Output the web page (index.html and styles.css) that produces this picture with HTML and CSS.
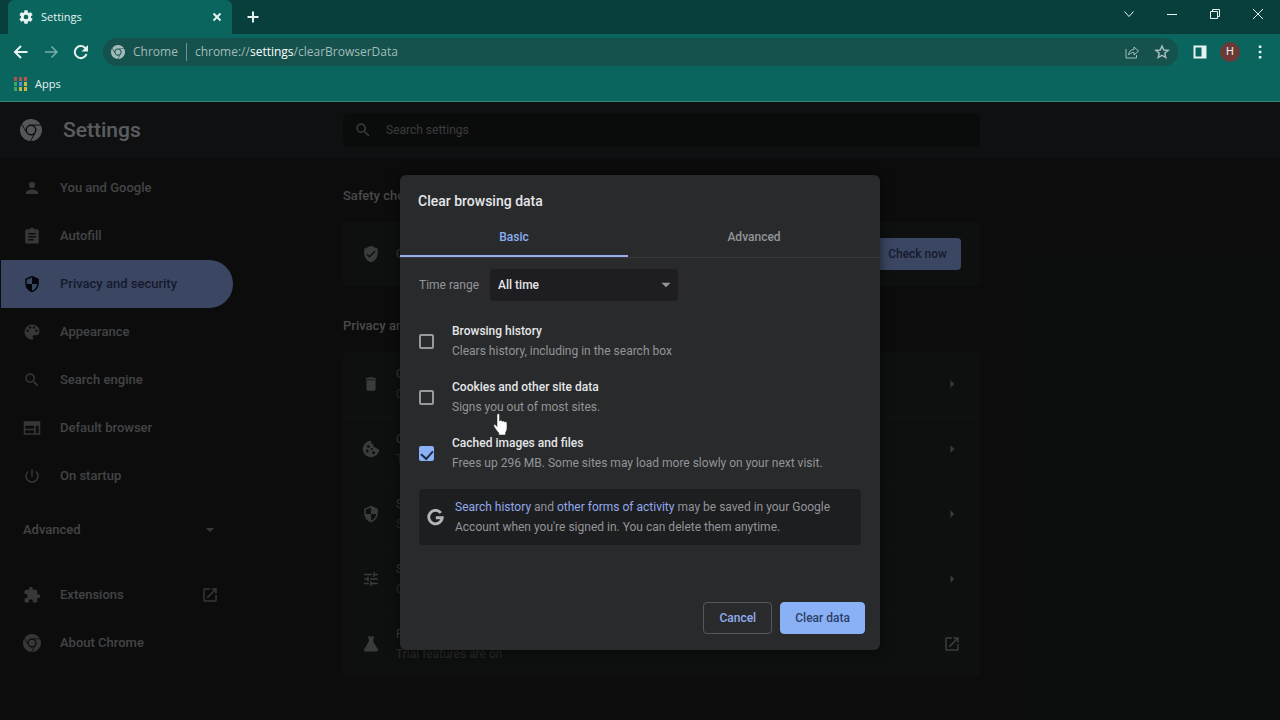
FILE: index.html
```html
<!DOCTYPE html>
<html lang="en">
<head>
    <meta charset="utf-8">
    <title>Settings</title>
    <meta name="viewport" content="width=device-width, initial-scale=1.0">
    <link rel="stylesheet" href="styles.css">
</head>
<body>
    <svg class="sprite" aria-hidden="true">
        <symbol id="chrome" viewBox="0 0 24 24">
            <path d="M2.2 5.060A12 12 0 0 1 22.400 6H12A6 6 0 0 0 6 11.600Z"/>
            <path transform="rotate(120 12 12)" d="M2.2 5.060A12 12 0 0 1 22.400 6H12A6 6 0 0 0 6 11.600Z"/>
            <path transform="rotate(240 12 12)" d="M2.2 5.060A12 12 0 0 1 22.400 6H12A6 6 0 0 0 6 11.600Z"/>
            <circle cx="12" cy="12" r="4.4"/>
        </symbol>
        <symbol id="search" viewBox="0 0 24 24"><path d="M15.5 14h-.79l-.28-.27A6.47 6.47 0 0 0 16 9.5 6.5 6.5 0 1 0 9.5 16c1.61 0 3.09-.59 4.23-1.57l.27.28v.79l5 4.99L20.49 19l-4.99-5zm-6 0C7.01 14 5 11.99 5 9.5S7.01 5 9.5 5 14 7.01 14 9.5 11.99 14 9.5 14z"/></symbol>
        <symbol id="open" viewBox="0 0 24 24"><path d="M19 19H5V5h7V3H5a2 2 0 0 0-2 2v14a2 2 0 0 0 2 2h14c1.1 0 2-.9 2-2v-7h-2v7zM14 3v2h3.59l-9.83 9.83 1.41 1.41L19 6.41V10h2V3h-7z"/></symbol>
        <symbol id="shield" viewBox="0 0 24 24"><path d="M12 1L3 5v6c0 5.55 3.84 10.74 9 12 5.16-1.26 9-6.45 9-12V5l-9-4zm0 10.99h7c-.53 4.12-3.28 7.79-7 8.94V12H5V6.3l7-3.11v8.8z"/></symbol>
        <symbol id="arrow-right" viewBox="0 0 24 24"><path d="M10 17V7l5 5z"/></symbol>
        <symbol id="arrow-down" viewBox="0 0 24 24"><path d="M5 8.5h14l-7 7z"/></symbol>
    </svg>

    <div class="browser">
        <div class="tab-strip">
            <div class="tab">
                <svg class="icon" viewBox="0 0 24 24"><path d="M19.43 12.98c.04-.32.07-.64.07-.98s-.03-.66-.07-.98l2.11-1.65c.19-.15.24-.42.12-.64l-2-3.46c-.12-.22-.39-.3-.61-.22l-2.49 1c-.52-.4-1.08-.73-1.69-.98l-.38-2.65A.488.488 0 0 0 14 2h-4c-.25 0-.46.18-.49.42l-.38 2.65c-.61.25-1.17.59-1.69.98l-2.49-1c-.23-.09-.49 0-.61.22l-2 3.46c-.13.22-.07.49.12.64l2.11 1.65c-.04.32-.07.65-.07.98s.03.66.07.98l-2.11 1.65c-.19.15-.24.42-.12.64l2 3.46c.12.22.39.3.61.22l2.49-1c.52.4 1.08.73 1.69.98l.38 2.65c.03.24.24.42.49.42h4c.25 0 .46-.18.49-.42l.38-2.65c.61-.25 1.17-.59 1.69-.98l2.49 1c.23.09.49 0 .61-.22l2-3.46c.12-.22.07-.49-.12-.64l-2.11-1.65zM12 15.5a3.5 3.5 0 1 1 0-7 3.5 3.5 0 0 1 0 7z"/></svg>
                <span class="tab-title">Settings</span>
                <button class="tool" aria-label="Close tab"><svg viewBox="0 0 16 16"><path class="line bold" d="M4.500 4.500l7 7M11.500 4.500l-7 7"/></svg></button>
            </div>
            <button class="tool new-tab" aria-label="New tab"><svg viewBox="0 0 16 16"><path class="line bold" d="M8 2.500v11M2.500 8h11"/></svg></button>
            <div class="window-buttons">
                <button class="tool" aria-label="Search tabs"><svg viewBox="0 0 16 16"><path class="line" d="M3.500 5.500L8 10.500l4.500-5"/></svg></button>
                <button class="tool" aria-label="Minimize"><svg viewBox="0 0 16 16"><path class="line" d="M3 8.500h10"/></svg></button>
                <button class="tool" aria-label="Restore"><svg viewBox="0 0 16 16"><path class="line" d="M3.500 5.500h7v7h-7zM5.500 5.500v-2h7v7h-2"/></svg></button>
                <button class="tool" aria-label="Close"><svg viewBox="0 0 16 16"><path class="line" d="M3 3l10 10M13 3L3 13"/></svg></button>
            </div>
        </div>

        <div class="toolbar">
            <div class="tools nav-tools">
                <button class="tool" aria-label="Back"><svg viewBox="0 0 16 16"><path class="line bold" d="M14.500 8H2.500M8 2L2 8l6 6"/></svg></button>
                <button class="tool forward" aria-label="Forward"><svg viewBox="0 0 16 16"><path class="line medium" d="M2 8h12M8.500 2.500L14 8l-5.500 5.500"/></svg></button>
                <button class="tool" aria-label="Reload"><svg viewBox="0 0 16 16"><path class="line bold" d="M13.500 10A6 6 0 1 1 12 3.800L13.500 5.500"/><path fill="currentColor" d="M15 1v6.500H8.500z"/></svg></button>
            </div>
            <div class="omnibox">
                <svg class="icon"><use href="#chrome"/></svg>
                <span class="site-name">Chrome</span>
                <div class="url" role="textbox" contenteditable="true" spellcheck="false" aria-label="Address">chrome://<b>settings</b>/clearBrowserData</div>
                <button class="tool" aria-label="Share"><svg viewBox="0 0 16 16"><path class="line" d="M2 5v9h10.500v-3M4.500 11c.3-3.500 2.200-5.300 5.500-5.500V3l4.500 4L10 11V8.500C7.500 8.500 5.800 9.300 4.500 11z"/></svg></button>
                <button class="tool" aria-label="Bookmark this tab"><svg viewBox="0 0 16 16"><path class="line medium" d="M8 2l1.800 4 4.300.4-3.300 2.900 1 4.300L8 11.400l-3.800 2.200 1-4.300-3.300-2.900L6.200 6z"/></svg></button>
            </div>
            <div class="tools">
                <button class="tool" aria-label="Side panel"><svg viewBox="0 0 16 16"><path fill="currentColor" fill-rule="evenodd" d="M1.500 1.500h13v13h-13zM3.500 3.500v9h6v-9z"/></svg></button>
                <button class="avatar" aria-label="Profile">H</button>
                <button class="tool" aria-label="Menu"><svg viewBox="0 0 16 16"><path fill="currentColor" d="M6.800 1.500h2.600v2.600H6.800zM6.800 6.700h2.600v2.600H6.800zM6.800 11.900h2.600v2.600H6.800z"/></svg></button>
            </div>
        </div>

        <div class="bookmarks">
            <a class="bookmark" href="#">
                <svg viewBox="0 0 14 14"><path fill="#a8584c" d="M1 0h3v4H1zM6 0h3v4H6z"/><path fill="#b8584c" d="M11 0h3v4h-3z"/><path fill="#37a866" d="M1 5h3v4H1zM1 10h3v4H1z"/><path fill="#4f8fd0" d="M6 5h3v4H6z"/><path fill="#c8b54a" d="M11 5h3v4h-3zM6 10h3v4H6zM11 10h3v4h-3z"/></svg>
                Apps
            </a>
        </div>
    </div>

    <div class="page">
        <header class="header">
            <div class="brand">
                <svg><use href="#chrome"/></svg>
                <h1>Settings</h1>
            </div>
            <label class="search">
                <svg class="icon"><use href="#search"/></svg>
                <input type="search" placeholder="Search settings" aria-label="Search settings">
            </label>
        </header>

        <div class="columns">
            <nav class="sidebar">
                <a class="nav-item" href="#"><svg class="icon" viewBox="0 0 24 24"><path d="M12 12a4 4 0 1 0 0-8 4 4 0 0 0 0 8zm0 2c-2.670 0-8 1.340-8 4v2h16v-2c0-2.660-5.330-4-8-4z"/></svg>You and Google</a>
                <a class="nav-item" href="#"><svg class="icon" viewBox="0 0 24 24"><path d="M19 3h-4.180a3 3 0 0 0-5.640 0H5a2 2 0 0 0-2 2v15c0 1.100.9 2 2 2h14a2 2 0 0 0 2-2V5a2 2 0 0 0-2-2zm-5 15H7v-2h7v2zm3-4H7v-2h10v2zm0-4H7V8h10v2z"/></svg>Autofill</a>
                <a class="nav-item selected" href="#"><svg class="icon"><use href="#shield"/></svg>Privacy and security</a>
                <a class="nav-item" href="#"><svg class="icon" viewBox="0 0 24 24"><path d="M12 2a10 10 0 0 0 0 20c.9 0 1.700-.7 1.700-1.700 0-.4-.2-.8-.4-1.100-.3-.3-.4-.7-.4-1.100 0-.9.700-1.700 1.700-1.700h2A5.500 5.500 0 0 0 22 11c0-5-4.500-9-10-9zM6 12a1.600 1.600 0 1 1 0-3.200A1.600 1.600 0 0 1 6 12zm3.300-4.500a1.600 1.600 0 1 1 0-3.200 1.600 1.600 0 0 1 0 3.200zm5.400 0a1.600 1.600 0 1 1 0-3.200 1.600 1.600 0 0 1 0 3.200zM18 12a1.600 1.600 0 1 1 0-3.200 1.600 1.600 0 0 1 0 3.200z"/></svg>Appearance</a>
                <a class="nav-item" href="#"><svg class="icon"><use href="#search"/></svg>Search engine</a>
                <a class="nav-item" href="#"><svg class="icon" viewBox="0 0 24 24"><path fill-rule="evenodd" d="M1 3h22v18H1zM3 9v4h12V9zM3 15v4h12v-4zM17 9v10h4V9z"/></svg>Default browser</a>
                <a class="nav-item" href="#"><svg class="icon" viewBox="0 0 24 24"><path d="M13 3h-2v10h2V3zm4.830 2.170l-1.420 1.420A6.920 6.920 0 0 1 19 12a7 7 0 1 1-11.420-5.420L6.170 5.170A8.930 8.930 0 0 0 3 12a9 9 0 1 0 14.830-6.830z"/></svg>On startup</a>
                <button class="nav-item advanced">Advanced<svg class="icon"><use href="#arrow-down"/></svg></button>
                <hr>
                <a class="nav-item" href="#"><svg class="icon" viewBox="0 0 24 24"><path d="M20.500 11H19V7a2 2 0 0 0-2-2h-4V3.500a2.500 2.500 0 0 0-5 0V5H4a2 2 0 0 0-2 2v3.800h1.500a2.700 2.700 0 0 1 0 5.400H2V20c0 1.100.9 2 2 2h3.800v-1.500a2.700 2.700 0 0 1 5.400 0V22H17a2 2 0 0 0 2-2v-4h1.500a2.500 2.500 0 0 0 0-5z"/></svg>Extensions<svg class="icon trailing"><use href="#open"/></svg></a>
                <a class="nav-item" href="#"><svg class="icon"><use href="#chrome"/></svg>About Chrome</a>
            </nav>

            <main class="content">
                <h2>Safety check</h2>
                <section class="card">
                    <div class="row">
                        <svg class="icon" viewBox="0 0 24 24"><path d="M12 1L3 5v6c0 5.550 3.840 10.740 9 12 5.160-1.260 9-6.450 9-12V5l-9-4zm-2 16l-4-4 1.410-1.410L10 14.170l6.590-6.590L18 9l-8 8z"/></svg>
                        <div class="row-text"><span>Chrome can help keep you safe</span></div>
                        <button class="check-now">Check now</button>
                    </div>
                </section>

                <h2>Privacy and security</h2>
                <section class="card">
                    <a class="row" href="#">
                        <svg class="icon" viewBox="0 0 24 24"><path d="M6 19c0 1.100.9 2 2 2h8a2 2 0 0 0 2-2V7H6v12zM19 4h-3.500l-1-1h-5l-1 1H5v2h14V4z"/></svg>
                        <div class="row-text"><span>Clear browsing data</span><small>Clear history, cookies, cache, and more</small></div>
                        <svg class="icon"><use href="#arrow-right"/></svg>
                    </a>
                    <a class="row" href="#">
                        <svg class="icon" viewBox="0 0 24 24"><path fill-rule="evenodd" d="M12 1a11 11 0 1 0 11 11c-2 .6-3.600-.4-4-2-2.600.3-4.200-1.400-3.800-3.800C13 5.800 11.800 3.600 12 1zM8.500 6.500a2 2 0 1 0 .01 0zM7 12.500a2 2 0 1 0 .01 0zM13 10.500a1.500 1.500 0 1 0 .01 0zM15.500 15a2 2 0 1 0 .01 0z"/></svg>
                        <div class="row-text"><span>Cookies and other site data</span><small>Third-party cookies are blocked in Incognito</small></div>
                        <svg class="icon"><use href="#arrow-right"/></svg>
                    </a>
                    <a class="row" href="#">
                        <svg class="icon"><use href="#shield"/></svg>
                        <div class="row-text"><span>Security</span><small>Safe Browsing and other security settings</small></div>
                        <svg class="icon"><use href="#arrow-right"/></svg>
                    </a>
                    <a class="row" href="#">
                        <svg class="icon" viewBox="0 0 24 24"><path d="M3 17v2h6v-2H3zM3 5v2h10V5H3zm10 16v-2h8v-2h-8v-2h-2v6h2zM7 9v2H3v2h4v2h2V9H7zm14 4v-2H11v2h10zM15 9h2V7h4V5h-4V3h-2v6z"/></svg>
                        <div class="row-text"><span>Site settings</span><small>Controls what information sites can use</small></div>
                        <svg class="icon"><use href="#arrow-right"/></svg>
                    </a>
                    <a class="row" href="#">
                        <svg class="icon" viewBox="0 0 24 24"><path d="M8 2h8v2h-1v5l6 10c.8 1.400 0 3-1.600 3H4.600C3 22 2.200 20.400 3 19L9 9V4H8z"/></svg>
                        <div class="row-text"><span>Privacy Sandbox</span><small>Trial features are on</small></div>
                        <svg class="icon"><use href="#open"/></svg>
                    </a>
                </section>
            </main>
        </div>

        <div class="backdrop">
            <form class="dialog" role="dialog" aria-labelledby="dialog-title">
                <h2 id="dialog-title">Clear browsing data</h2>
                <div class="tabs" role="tablist">
                    <button type="button" class="active" role="tab" aria-selected="true">Basic</button>
                    <button type="button" role="tab" aria-selected="false">Advanced</button>
                </div>

                <div class="time-range">
                    <label for="range">Time range</label>
                    <div class="select">
                        <select id="range">
                            <option>Last hour</option>
                            <option>Last 24 hours</option>
                            <option>Last 7 days</option>
                            <option>Last 4 weeks</option>
                            <option selected>All time</option>
                        </select>
                        <svg class="icon"><use href="#arrow-down"/></svg>
                    </div>
                </div>

                <div class="options">
                    <label class="option">
                        <input type="checkbox">
                        <span><strong>Browsing history</strong>Clears history, including in the search box</span>
                    </label>
                    <label class="option">
                        <input type="checkbox">
                        <span><strong>Cookies and other site data</strong>Signs you out of most sites.</span>
                    </label>
                    <label class="option">
                        <input type="checkbox" checked>
                        <span><strong>Cached images and files</strong>Frees up 296 MB. Some sites may load more slowly on your next visit.</span>
                    </label>
                </div>

                <div class="notice">
                    <svg class="icon" viewBox="0 0 24 24"><path fill="none" stroke="currentColor" stroke-width="4" d="M19.500 5.500A9.500 9.500 0 1 0 21.500 12.300H12.500"/></svg>
                    <p><a href="#">Search history</a> and <a href="#">other forms of activity</a> may be saved in your Google Account when you're signed in. You can delete them anytime.</p>
                </div>

                <div class="actions">
                    <button type="button" class="cancel">Cancel</button>
                    <button type="submit" class="clear">Clear data</button>
                </div>

                <svg class="pointer" viewBox="0 0 16 24"><path fill="#fff" stroke="#222" stroke-width=".5" d="M4 1.800C4 .4 6.500.4 6.500 1.800V8c.5-1 2.400-.8 2.600.4.600-.9 2.300-.6 2.500.6.800-.7 2.400-.3 2.400 1.200V15c0 2-.9 3.500-1.500 4.800V22H5.800v-2C4.500 18.500 2 15.500.8 13c-.6-1.400 1-2.200 2-.9L4 13.500z"/></svg>
            </form>
        </div>
    </div>
</body>
</html>
```

FILE: styles.css
```css
:root {
    --strip: #083f3d;
    --toolbar: #0b655f;
    --omnibox: #15514d;
    --page-bg: #1e2021;
    --card-bg: #25282a;
    --header-bg: #232a2f;
    --dialog-bg: #292a2c;
    --accent: #8ab0f5;
    --text: #e4e6e8;
    --muted: #929598;
}

* {
    box-sizing: border-box;
}

body {
    margin: 0;
    height: 100vh;
    display: flex;
    flex-direction: column;
    overflow: hidden;
    background: var(--page-bg);
    color: var(--text);
    font: 12px/20px Roboto, sans-serif;
}

button,
input,
select {
    font: inherit;
    color: inherit;
    border: none;
    background: none;
    padding: 0;
    margin: 0;
}

a {
    color: inherit;
    text-decoration: none;
}

.sprite {
    position: absolute;
    width: 0;
    height: 0;
}

.icon {
    flex: none;
    width: 18px;
    height: 18px;
    fill: currentColor;
}

.line {
    fill: none;
    stroke: currentColor;
    stroke-width: 1;
}

.line.medium {
    stroke-width: 1.5;
}

.line.bold {
    stroke-width: 2;
}

/* browser frame */
.browser {
    flex: none;
    background: var(--toolbar);
    border-bottom: 1px solid #3b827d;
    color: #e6f3f1;
    font-family: "Open Sans", "Noto Sans", sans-serif;
    font-size: 11px;
}

.tab-strip {
    display: flex;
    align-items: center;
    height: 34px;
    padding-left: 8px;
    background: var(--strip);
}

.tab {
    display: flex;
    align-items: center;
    align-self: stretch;
    gap: 7px;
    width: 224px;
    padding: 0 7px 0 10px;
    background: var(--toolbar);
    border-radius: 6px 6px 0 0;
}

.tab .icon {
    width: 16px;
    height: 16px;
}

.tab-title {
    flex: 1;
}

.tool {
    flex: none;
    display: flex;
    width: 16px;
    height: 16px;
}

.tool svg {
    width: 16px;
    height: 16px;
}

.new-tab {
    margin-left: 13px;
}

.window-buttons {
    display: flex;
    gap: 27px;
    margin-left: auto;
    padding: 0 14px 6px 0;
}

.toolbar {
    display: flex;
    align-items: center;
    gap: 14px;
    height: 36px;
    padding: 0 12px 0 13px;
}

.tools {
    display: flex;
    align-items: center;
    gap: 12px;
}

.nav-tools {
    gap: 14px;
}

.forward {
    opacity: 0.5;
}

.omnibox {
    flex: 1;
    display: flex;
    align-items: center;
    gap: 8px;
    height: 28px;
    padding: 0 8px;
    border-radius: 14px;
    background: var(--omnibox);
    color: #a3bcb9;
    font-size: 12px;
}

.omnibox .icon {
    width: 14px;
    height: 14px;
}

.omnibox .tool {
    margin-left: 6px;
}

.site-name {
    line-height: 18px;
    padding-right: 8px;
    border-right: 1px solid #6f9490;
}

.url {
    flex: 1;
}

.url b {
    font-weight: 400;
    color: #fff;
}

.avatar {
    width: 20px;
    height: 20px;
    border-radius: 50%;
    background: #6a3a36;
    font: 11px/20px Roboto, sans-serif;
}

.bookmarks {
    display: flex;
    align-items: center;
    height: 31px;
    padding: 0 13px 4px;
}

.bookmark {
    display: flex;
    align-items: center;
    gap: 8px;
}

.bookmark svg {
    width: 14px;
    height: 14px;
}

/* settings page */
.page {
    position: relative;
    flex: 1;
    overflow: hidden;
}

.header {
    display: flex;
    align-items: center;
    height: 56px;
    background: var(--header-bg);
}

.brand {
    display: flex;
    align-items: center;
    gap: 21px;
    width: 343px;
    padding-left: 20px;
}

.brand svg {
    width: 22px;
    height: 22px;
    fill: #d5d8dc;
}

.brand h1 {
    margin: 0;
    font-size: 21px;
    font-weight: 500;
    line-height: 28px;
}

.search {
    display: flex;
    align-items: center;
    gap: 14px;
    width: 637px;
    height: 34px;
    padding: 0 11px;
    border-radius: 6px;
    background: #1b1e1f;
    color: var(--muted);
}

.search input {
    flex: 1;
    outline: none;
}

.search input::placeholder {
    color: var(--muted);
}

.columns {
    display: flex;
}

.sidebar {
    width: 233px;
    padding-top: 6px;
    color: #a6a9ad;
    font-size: 13px;
    font-weight: 500;
}

.nav-item {
    display: flex;
    align-items: center;
    gap: 19px;
    height: 48px;
    margin-left: 1px;
    padding: 0 14px 0 22px;
}

.nav-item .icon {
    color: #85898c;
}

.nav-item.selected {
    border-radius: 0 24px 24px 0;
    background: #95aff5;
    color: #35456f;
}

.nav-item.selected .icon {
    color: #08101f;
}

.advanced {
    width: 232px;
    margin-top: 6px;
    padding-right: 16px;
    justify-content: space-between;
}

.advanced .icon {
    width: 14px;
    height: 14px;
}

.trailing {
    margin-left: auto;
}

.sidebar hr {
    height: 1px;
    margin: 8px 0;
    border: none;
    background: #242728;
}

.content {
    width: 637px;
    margin-left: 110px;
    padding-top: 26px;
}

.content h2 {
    margin: 0 0 14px;
    font-size: 13px;
    font-weight: 500;
    line-height: 24px;
    color: #b4b7ba;
}

.card {
    margin-bottom: 28px;
    border-radius: 4px;
    background: var(--card-bg);
}

.row {
    display: flex;
    align-items: center;
    gap: 16px;
    height: 64px;
    padding: 0 19px;
    color: var(--muted);
}

.row + .row {
    height: 65px;
    border-top: 1px solid #2c2f31;
}

.row-text {
    flex: 1;
    display: flex;
    flex-direction: column;
}

.row-text small {
    font-size: 12px;
    color: #6c6f72;
}

.check-now {
    height: 32px;
    padding: 0 14px;
    border-radius: 4px;
    background: #95aff5;
    color: #35456f;
    font-weight: 500;
}

/* clear browsing data */
.backdrop {
    position: absolute;
    inset: 0;
    display: flex;
    justify-content: center;
    align-items: flex-start;
    padding-top: 73px;
    background: rgba(0, 0, 0, 0.6);
}

.dialog {
    position: relative;
    display: flex;
    flex-direction: column;
    width: 480px;
    border-radius: 6px;
    background: var(--dialog-bg);
    box-shadow: 0 2px 12px rgba(0, 0, 0, 0.6);
    color: var(--muted);
}

.dialog h2 {
    margin: 0;
    padding: 16px 18px 14px;
    font-size: 14px;
    font-weight: 500;
    line-height: 20px;
    color: var(--text);
}

.tabs {
    display: grid;
    grid-template-columns: 1fr 1fr;
    border-bottom: 1px solid #36383a;
}

.tabs button {
    height: 32px;
    margin-right: 12px;
    padding-bottom: 6px;
    border-bottom: 2px solid transparent;
    font-weight: 500;
}

.tabs .active {
    border-color: #98aee8;
    color: var(--accent);
}

.time-range {
    display: flex;
    align-items: center;
    gap: 11px;
    margin: 11px 19px 20px;
}

.select {
    position: relative;
    width: 188px;
}

.select select {
    appearance: none;
    width: 100%;
    height: 32px;
    padding: 0 8px;
    border-radius: 4px;
    background: #1e1d21;
    color: var(--text);
    font-weight: 500;
}

.select .icon {
    position: absolute;
    top: 8px;
    right: 4px;
    width: 16px;
    height: 16px;
    pointer-events: none;
}

.options {
    display: flex;
    flex-direction: column;
    gap: 16px;
    padding: 0 19px;
}

.option {
    display: flex;
    align-items: center;
    gap: 18px;
}

.option input {
    appearance: none;
    flex: none;
    display: grid;
    place-items: center;
    width: 15px;
    height: 15px;
    border: 2px solid #969a9b;
    border-radius: 2px;
}

.option input:checked {
    border-color: var(--accent);
    background: var(--accent);
}

.option input:checked::after {
    content: "";
    width: 6px;
    height: 9px;
    margin-bottom: 4px;
    border: solid #202a44;
    border-width: 0 2px 2px 0;
    transform: rotate(42deg);
}

.option strong {
    display: block;
    color: var(--text);
    font-weight: 500;
}

.notice {
    display: flex;
    align-items: center;
    gap: 11px;
    margin: 16px 19px 57px;
    padding: 8px;
    border-radius: 4px;
    background: #1d1e20;
}

.notice .icon {
    width: 17px;
    height: 17px;
    color: #b3b6b8;
}

.notice p {
    margin: 0;
}

.notice a {
    color: #92a9ec;
}

.actions {
    display: flex;
    justify-content: flex-end;
    gap: 8px;
    padding: 0 15px 16px;
}

.actions button {
    min-width: 69px;
    height: 32px;
    padding: 0 14px;
    border: 1px solid #54575b;
    border-radius: 4px;
    font-weight: 500;
}

.actions .cancel {
    color: #92acee;
}

.actions .clear {
    border-color: var(--accent);
    background: var(--accent);
    color: #2c3f68;
}

.pointer {
    position: absolute;
    top: 238px;
    left: 93px;
    width: 16px;
    height: 24px;
}
```
